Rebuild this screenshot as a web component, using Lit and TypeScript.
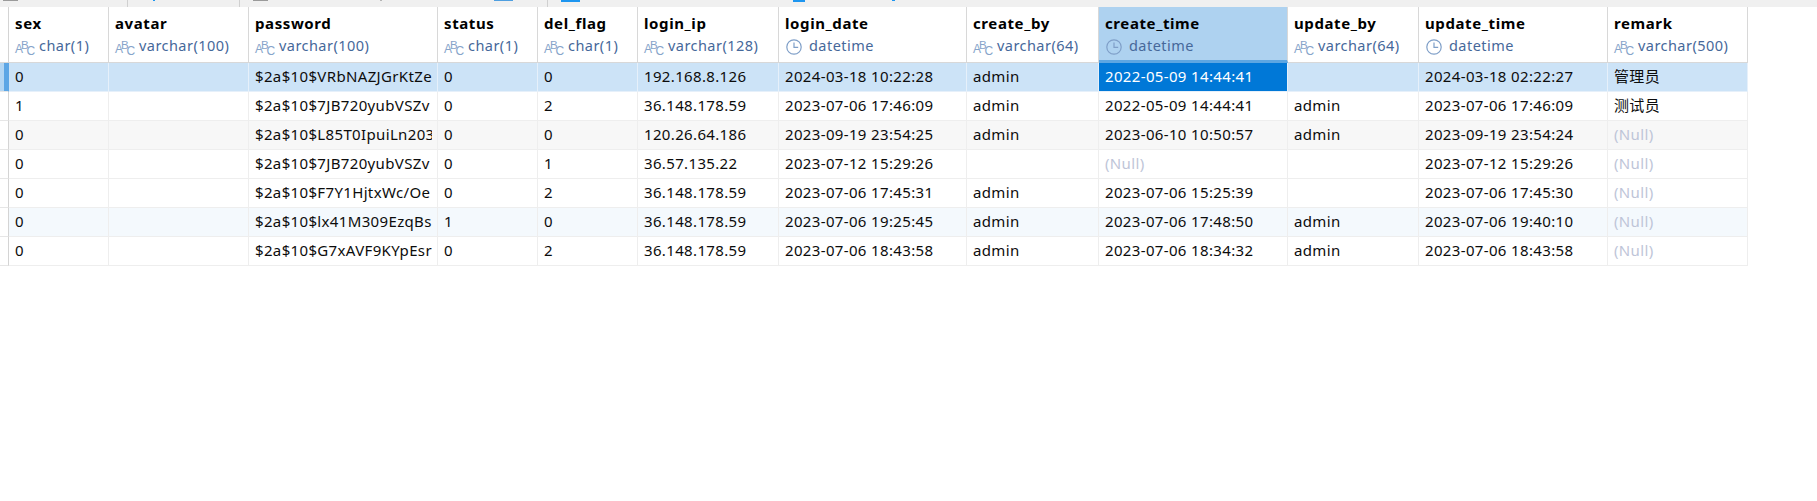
import { LitElement, html, css, svg } from "lit";
import { customElement } from "lit/decorators.js";
import { classMap } from "lit/directives/class-map.js";

type Col = { name: string; type: string; w: number; time?: boolean };
const COLS: Col[] = [
  { name: "sex", type: "char(1)", w: 100 },
  { name: "avatar", type: "varchar(100)", w: 140 },
  { name: "password", type: "varchar(100)", w: 189 },
  { name: "status", type: "char(1)", w: 100 },
  { name: "del_flag", type: "char(1)", w: 100 },
  { name: "login_ip", type: "varchar(128)", w: 141 },
  { name: "login_date", type: "datetime", w: 188, time: true },
  { name: "create_by", type: "varchar(64)", w: 132 },
  { name: "create_time", type: "datetime", w: 189, time: true },
  { name: "update_by", type: "varchar(64)", w: 131 },
  { name: "update_time", type: "datetime", w: 189, time: true },
  { name: "remark", type: "varchar(500)", w: 140 },
];
const N = "(Null)";
const ROWS: string[][] = [
  ["0", "", "$2a$10$VRbNAZJGrKtZe", "0", "0", "192.168.8.126", "2024-03-18 10:22:28", "admin", "2022-05-09 14:44:41", "", "2024-03-18 02:22:27", "管理员"],
  ["1", "", "$2a$10$7JB720yubVSZv", "0", "2", "36.148.178.59", "2023-07-06 17:46:09", "admin", "2022-05-09 14:44:41", "admin", "2023-07-06 17:46:09", "测试员"],
  ["0", "", "$2a$10$L85T0IpuiLn203", "0", "0", "120.26.64.186", "2023-09-19 23:54:25", "admin", "2023-06-10 10:50:57", "admin", "2023-09-19 23:54:24", N],
  ["0", "", "$2a$10$7JB720yubVSZv", "0", "1", "36.57.135.22", "2023-07-12 15:29:26", "", N, "", "2023-07-12 15:29:26", N],
  ["0", "", "$2a$10$F7Y1HjtxWc/Oe", "0", "2", "36.148.178.59", "2023-07-06 17:45:31", "admin", "2023-07-06 15:25:39", "", "2023-07-06 17:45:30", N],
  ["0", "", "$2a$10$lx41M309EzqBs", "1", "0", "36.148.178.59", "2023-07-06 19:25:45", "admin", "2023-07-06 17:48:50", "admin", "2023-07-06 19:40:10", N],
  ["0", "", "$2a$10$G7xAVF9KYpEsr", "0", "2", "36.148.178.59", "2023-07-06 18:43:58", "admin", "2023-07-06 18:34:32", "admin", "2023-07-06 18:43:58", N],
];
const ROW_TINT = ["sel", "", "grey", "", "", "blue", ""];

// Slivers of the clipped toolbar above the grid: [gap before, width, height, colour]
const TOOLBAR: [number, number, number, string][] = [
  [3, 15, 1, "#9a9a9a"], [109, 1, 7, "#d0d0d0"], [25, 2, 1, "#1e96f0"], [84, 1, 7, "#d0d0d0"],
  [13, 15, 1, "#9a9a9a"], [112, 2, 1, "#b5b5b5"], [112, 19, 1, "#4f9fe0"], [34, 1, 7, "#d0d0d0"],
  [13, 19, 2, "#1e96f0"], [213, 12, 2, "#1e96f0"], [87, 3, 1, "#1e96f0"],
];

const abc = svg`<svg class="ico" width="19" height="16" viewBox="0 0 19 16">
  <text class="gl" x="0" y="15" font-size="12">A</text>
  <text class="gl" x="6" y="11" font-size="11.5">B</text>
  <text class="gl" x="11.5" y="16.5" font-size="12">C</text>
</svg>`;
const clock = svg`<svg class="ico clk" width="16" height="16" viewBox="0 0 16 16" fill="none" stroke="#7f9fc8" stroke-width="1.2">
  <circle cx="8" cy="8" r="7.2"/><path d="M8 3.6V8.4H12.2"/>
</svg>`;

@customElement("app-root")
export class AppRoot extends LitElement {
  static styles = css`
    :host { display: block; width: 1817px; height: 501px; background: #fff; overflow: hidden;
      font-family: "Noto Sans", "Noto Sans CJK SC", sans-serif; font-size: 15px; color: #0c0c0c; }
    .bar { display: flex; align-items: flex-start; height: 7px; background: #f0f0f0; }
    .bar i { display: block; flex: none; }
    .grid { display: grid; width: max-content; }
    .c { box-sizing: border-box; border-right: 1px solid #eee; border-bottom: 1px solid #eee; height: 29px;
      line-height: 27px; padding: 0 5px 0 6px; white-space: nowrap; letter-spacing: .35px; }
    .c span { display: block; overflow: hidden; }
    .g { border-right: 1px solid #d4d4d4; border-bottom: 1px solid #e6e6e6; height: 29px; box-sizing: border-box; }
    .g.sel { background: linear-gradient(90deg, #b3d6f3 0 4px, #5ca6e5 4px 8px); border-right: 1px solid #5ca6e5; }
    .gh { height: 56px; box-sizing: border-box; border-right: 1px solid #d4d4d4; border-bottom: 1px solid #d8d8d8; }
    .h { height: 56px; box-sizing: border-box; border-right: 1px solid #d8d8d8; border-bottom: 1px solid #d8d8d8;
      padding: 5px 6px 0 6px; white-space: nowrap; overflow: hidden; }
    .h.on { background: #aed2f0; border-bottom: 3px solid #5ca6e2; }
    .nm { font-weight: 700; font-size: 15px; line-height: 22px; letter-spacing: .6px; color: #000; }
    .ty { display: flex; align-items: center; gap: 5px; line-height: 20px; height: 22px; color: #46689a; font-size: 14.5px; letter-spacing: .45px; }
    .ico { flex: none; display: block; margin-top: 2px; overflow: visible; }
    .clk { margin-left: 1px; margin-right: 2px; margin-top: 3px; }
    .gl { fill: #86a4ca; font-family: "Liberation Sans", sans-serif; font-weight: 400; letter-spacing: 0; }
    .sel { background: #cce3f7; }
    .c.sel { border-color: #e6f0fa; }
    .grey { background: #f7f7f7; }
    .blue { background: #f4f9fd; }
    .c.cur { background: #0078d7; color: #fff; border-color: #e6f0fa; }
    .null { color: #bec5d8; }
  `;

  render() {
    const tmpl = `9px ${COLS.map((c) => c.w + "px").join(" ")}`;
    return html`
      <div class="bar">
        ${TOOLBAR.map(([gap, w, h, col]) => html`<i style="margin-left:${gap}px;width:${w}px;height:${h}px;background:${col}"></i>`)}
      </div>
      <div class="grid" style="grid-template-columns:${tmpl}">
        <div class="gh"></div>
        ${COLS.map((c, i) => html`
          <div class=${classMap({ h: true, on: i === 8 })}>
            <div class="nm">${c.name}</div>
            <div class="ty">${c.time ? clock : abc}<span>${c.type}</span></div>
          </div>`)}
        ${ROWS.map((r, ri) => html`
          <div class=${classMap({ g: true, sel: ri === 0 })}></div>
          ${r.map((v, ci) => html`
            <div class="c ${ROW_TINT[ri]} ${ri === 0 && ci === 8 ? "cur" : ""}">
              <span class=${v === N ? "null" : ""}>${v}</span>
            </div>`)}
        `)}
      </div>
    `;
  }
}
